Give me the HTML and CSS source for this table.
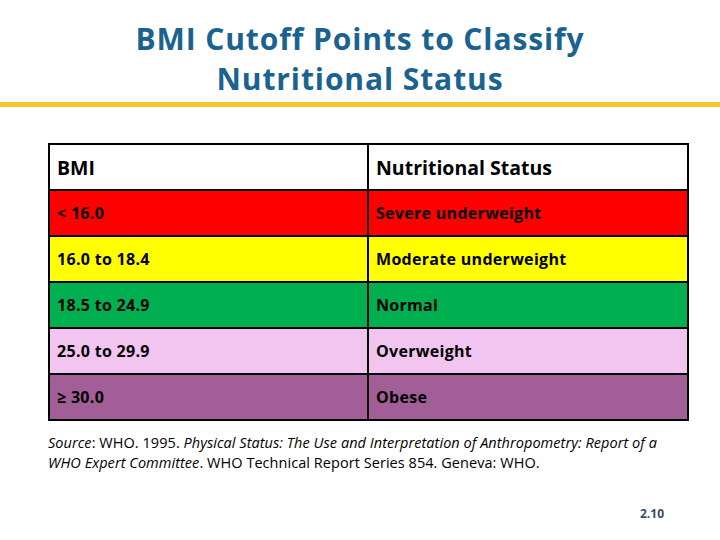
FILE: index.html
```html
<!DOCTYPE html>
<html>
<head>
<meta charset="utf-8">
<link rel="stylesheet" href="styles.css">
</head>
<body>
<div class="slide">
  <h1 class="title">BMI Cutoff Points to Classify<br>Nutritional Status</h1>
  <div class="rule"></div>
  <table class="bmi">
    <tr class="head"><td>BMI</td><td>Nutritional Status</td></tr>
    <tr class="red"><td>&lt; 16.0</td><td>Severe underweight</td></tr>
    <tr class="yellow"><td>16.0 to 18.4</td><td>Moderate underweight</td></tr>
    <tr class="green"><td>18.5 to 24.9</td><td>Normal</td></tr>
    <tr class="pink"><td>25.0 to 29.9</td><td>Overweight</td></tr>
    <tr class="purple"><td>≥ 30.0</td><td>Obese</td></tr>
  </table>
  <p class="source"><i>Source</i>: WHO. 1995. <i>Physical Status: The Use and Interpretation of Anthropometry: Report of a<br>WHO Expert Committee</i>. WHO Technical Report Series 854. Geneva: WHO.</p>
  <div class="pagenum">2.10</div>
</div>
</body>
</html>
```
FILE: styles.css
```css
html, body {
  margin: 0;
  padding: 0;
  background: #fff;
}
.slide {
  width: 720px;
  height: 540px;
  font-family: "Open Sans", "Lato", sans-serif;
  display: flex;
  flex-direction: column;
}
.slide > * {
  flex-shrink: 0;
}
.title {
  margin: 0;
  padding-top: 19px;
  height: 102px;
  box-sizing: border-box;
  text-align: center;
  font-size: 30px;
  line-height: 40px;
  font-weight: 700;
  color: #1a6391;
  letter-spacing: 0.9px;
}
.rule {
  height: 5px;
  background: #f5c52c;
}
.bmi {
  margin: 36px 0 0 48px;
  width: 641px;
  border-collapse: collapse;
  border: 2px solid #000;
}
.bmi td {
  border: 2px solid #000;
  height: 46px;
  box-sizing: border-box;
  padding: 0 0 0 7px;
  font-weight: 700;
  font-size: 16px;
  letter-spacing: 0.3px;
  color: #000;
  vertical-align: middle;
}
.bmi td:first-child {
  width: 319px;
}
.bmi .head td {
  background: #fff;
  font-size: 19.5px;
  font-weight: 700;
  letter-spacing: 0;
}
.red td { background: #ff0000; }
.yellow td { background: #ffff00; }
.green td { background: #00b050; }
.pink td { background: #f2c4f0; }
.purple td { background: #a25e96; }
.source {
  margin: 12px 0 0 48px;
  width: 670px;
  font-size: 14.5px;
  line-height: 20px;
  letter-spacing: 0.05px;
  color: #000;
}
.source i {
  font-weight: 400;
}
.pagenum {
  margin: 32px 56px 0 0;
  text-align: right;
  font-size: 12px;
  font-weight: 700;
  color: #3b4a6b;
}
```
